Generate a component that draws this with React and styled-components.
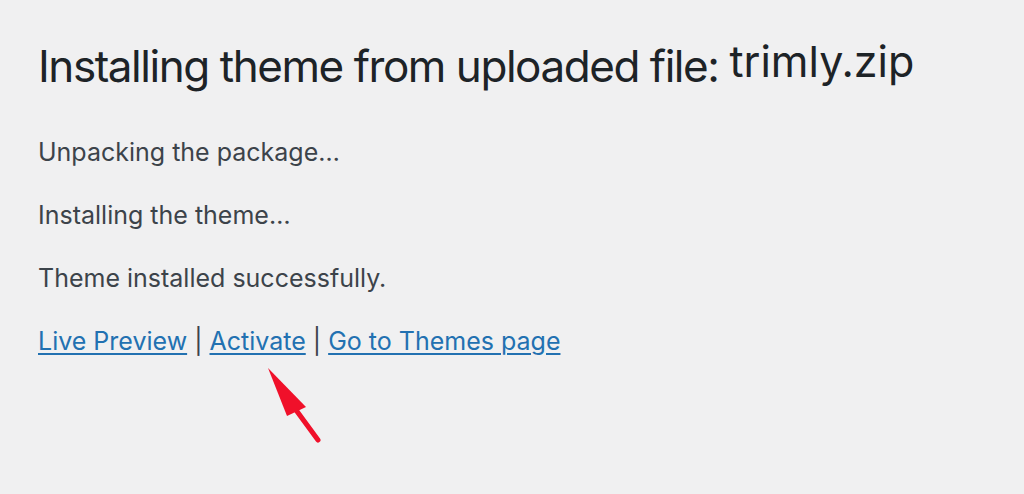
import React from "react";
import styled, { createGlobalStyle } from "styled-components";

const GlobalStyle = createGlobalStyle`
  html, body {
    margin: 0;
    padding: 0;
    background: #f0f0f1;
  }
  body {
    font-family: Inter, "Liberation Sans", sans-serif;
    color: #3c434a;
  }
`;

const Wrap = styled.div`
  width: 1024px;
  height: 494px;
  box-sizing: border-box;
  padding: 38px 38px 0;
  overflow: hidden;
  position: relative;
`;

const Title = styled.h1`
  margin: 0 0 42px;
  font-size: 44px;
  font-weight: 400;
  line-height: 56px;
  color: #1d2327;
  letter-spacing: -1.45px;
`;

const FileName = styled.span`
  position: relative;
  top: -5px;
  margin-left: 11px;
  font-size: 43px;
  letter-spacing: 0;
`;

const Line = styled.p`
  margin: 0 0 31px;
  font-size: 25px;
  line-height: 32px;
`;

const Actions = styled.p`
  margin: 0;
  font-size: 25px;
  line-height: 32px;
  color: #3c434a;
`;

const ActionLink = styled.a`
  color: #2271b1;
  text-decoration: underline;
  text-underline-offset: 3px;
  text-decoration-thickness: 1.5px;
`;

const Arrow = styled.svg`
  position: absolute;
  left: 260px;
  top: 360px;
`;

export default function App() {
  return (
    <>
      <GlobalStyle />
      <Wrap>
        <Title>
          Installing theme from uploaded file:<FileName>trimly.zip</FileName>
        </Title>
        <Line>Unpacking the package…</Line>
        <Line>Installing the theme…</Line>
        <Line>Theme installed successfully.</Line>
        <Actions>
          <ActionLink href="#">Live Preview</ActionLink> |{" "}
          <ActionLink href="#">Activate</ActionLink> |{" "}
          <ActionLink href="#">Go to Themes page</ActionLink>
        </Actions>
        <Arrow width="70" height="90" viewBox="260 360 70 90">
          <line x1="296" y1="410" x2="318" y2="440" stroke="#f0102a" strokeWidth="5" strokeLinecap="round" />
          <polygon points="268,368 306,407 287,416" fill="#f0102a" />
        </Arrow>
      </Wrap>
    </>
  );
}
